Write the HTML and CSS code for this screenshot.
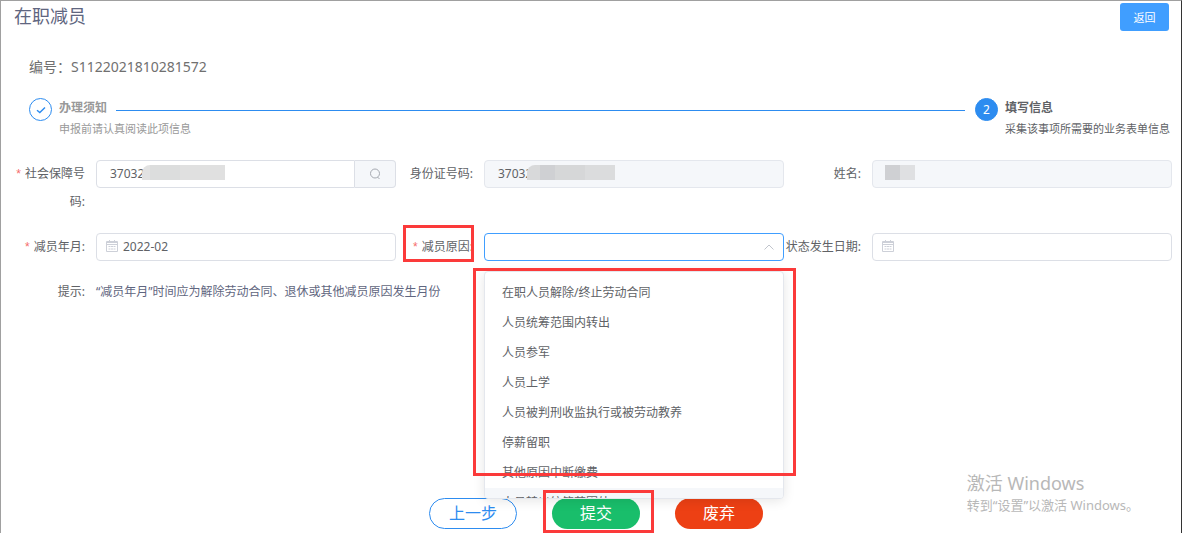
FILE: index.html
```
<!DOCTYPE html>
<html lang="zh-CN">

<head>
    <meta charset="UTF-8">
    <meta name="viewport" content="width=device-width, initial-scale=1.0">
    <title>在职减员</title>
    <link rel="stylesheet" href="styles.css">
</head>

<body>
    <div class="page">
        <header class="header">
            <h1 class="title">在职减员</h1>
            <button type="button" class="back-btn">返回</button>
        </header>
        <p class="serial">编号：S1122021810281572</p>

        <div class="steps">
            <div class="step done">
                <span class="step-icon">
                    <svg width="12" height="12" viewBox="0 0 12 12" fill="none" stroke="currentColor" stroke-width="1.4">
                        <path d="M2 6.2 4.8 8.6 10 3.4" />
                    </svg>
                </span>
                <div class="step-main">
                    <div class="step-title">办理须知</div>
                    <div class="step-desc">申报前请认真阅读此项信息</div>
                </div>
            </div>
            <div class="step now">
                <span class="step-icon">2</span>
                <div class="step-main">
                    <div class="step-title">填写信息</div>
                    <div class="step-desc">采集该事项所需要的业务表单信息</div>
                </div>
            </div>
        </div>

        <form class="form">
            <div class="item">
                <label class="label required" for="ssn">社会保障号码:</label>
                <div class="field group">
                    <input class="input" id="ssn" type="text" value="37032">
                    <span class="mask mask-ssn"></span>
                    <button type="button" class="search-btn" aria-label="查询">
                        <svg width="12" height="12" viewBox="0 0 12 12" fill="none" stroke="currentColor">
                            <circle cx="6" cy="5.5" r="4.5" />
                            <path d="M8.5 9 10.5 11" />
                        </svg>
                    </button>
                </div>
            </div>
            <div class="item">
                <label class="label" for="idcard">身份证号码:</label>
                <div class="field">
                    <input class="input" id="idcard" type="text" value="37032" disabled>
                    <span class="mask mask-id"></span>
                </div>
            </div>
            <div class="item">
                <label class="label" for="name">姓名:</label>
                <div class="field">
                    <input class="input" id="name" type="text" disabled>
                    <span class="mask mask-name"></span>
                </div>
            </div>

            <div class="item">
                <label class="label required" for="month">减员年月:</label>
                <div class="field">
                    <input class="input has-icon" id="month" type="text" value="2022-02">
                    <svg class="calendar" width="12" height="12" viewBox="0 0 12 12" fill="none" stroke="currentColor">
                        <path d="M.5 1.500h11v10H.5zM.5 2.500h11M.5 4.500h11M3.500 0v3M8.500 0v3" />
                        <path d="M2.500 6.500h7M2.500 9h7" stroke-dasharray="2 .5" />
                    </svg>
                </div>
            </div>
            <div class="item">
                <label class="label required" for="reason">减员原因:<span class="mark mark-label"></span></label>
                <div class="field">
                    <select class="input select" id="reason">
                        <option value=""></option>
                    </select>
                    <svg class="arrow" width="10" height="6" viewBox="0 0 10 6" fill="none" stroke="currentColor">
                        <path d="M.5 5.500 5 1l4.500 4.500" />
                    </svg>
                    <div class="dropdown">
                        <ul class="options">
                            <li>在职人员解除/终止劳动合同</li>
                            <li>人员统筹范围内转出</li>
                            <li>人员参军</li>
                            <li>人员上学</li>
                            <li>人员被判刑收监执行或被劳动教养</li>
                            <li>停薪留职</li>
                            <li>其他原因中断缴费</li>
                            <li class="hover">人员转出统筹范围外</li>
                        </ul>
                    </div>
                    <span class="mark mark-options"></span>
                </div>
            </div>
            <div class="item">
                <label class="label" for="date">状态发生日期:</label>
                <div class="field">
                    <input class="input has-icon" id="date" type="text">
                    <svg class="calendar" width="12" height="12" viewBox="0 0 12 12" fill="none" stroke="currentColor">
                        <path d="M.5 1.500h11v10H.5zM.5 2.500h11M.5 4.500h11M3.500 0v3M8.500 0v3" />
                        <path d="M2.500 6.500h7M2.500 9h7" stroke-dasharray="2 .5" />
                    </svg>
                </div>
            </div>

            <div class="item tip">
                <span class="label">提示:</span>
                <p class="tip-text">“减员年月”时间应为解除劳动合同、退休或其他减员原因发生月份</p>
            </div>
        </form>

        <div class="footer">
            <button type="button" class="btn prev">上一步</button>
            <button type="button" class="btn submit">提交<span class="mark mark-submit"></span></button>
            <button type="button" class="btn discard">废弃</button>
        </div>

        <div class="watermark">
            <div class="watermark-title">激活 Windows</div>
            <div>转到“设置”以激活 Windows。</div>
        </div>
    </div>
</body>

</html>
```

FILE: styles.css
```
* {
    box-sizing: border-box;
}

body {
    margin: 0;
    font-family: "Noto Sans", "Noto Sans CJK SC", sans-serif;
    font-size: 12px;
    color: #606266;
    background-color: #fff;
}

h1,
p,
ul {
    margin: 0;
    padding: 0;
}

input,
select,
button {
    font-family: inherit;
}

.page {
    position: relative;
    display: flex;
    flex-direction: column;
    min-height: 100vh;
    padding: 2px 9px 4px 7px;
    border: 1px solid #a0a0a0;
    border-right: 1px solid #333;
    border-bottom: 0;
}

/* header */
.header {
    display: flex;
    justify-content: space-between;
    padding: 0 3px 0 6px;
}

.title {
    font-size: 18px;
    font-weight: 400;
    line-height: 26px;
    color: #5f6680;
}

.back-btn {
    width: 49px;
    height: 28px;
    padding: 0;
    border: 0;
    border-radius: 3px;
    font-size: 11px;
    color: #fff;
    background-color: #409eff;
}

.serial {
    margin: 26px 0 20px 21px;
    font-size: 14px;
    line-height: 20px;
    color: #707070;
}

/* steps */
.steps {
    display: flex;
    padding-left: 21px;
}

.step {
    display: flex;
    gap: 7px;
}

.step.done {
    flex: 1;
    color: #999;
}

.step.now {
    width: 197px;
    color: #606266;
}

.step-icon {
    display: flex;
    flex: none;
    align-items: center;
    justify-content: center;
    width: 23px;
    height: 23px;
    margin-top: 1px;
    border: 1px solid #2d8cf0;
    border-radius: 50%;
    color: #2d8cf0;
}

.step.now .step-icon {
    color: #fff;
    background-color: #2d8cf0;
}

.step-main {
    flex: 1;
    white-space: nowrap;
}

.step-title {
    display: flex;
    align-items: center;
    gap: 9px;
    height: 20px;
    font-weight: 700;
}

.done .step-title::after {
    content: "";
    flex: 1;
    height: 1px;
    margin: 6px 10px 0 0;
    background-color: #2d8cf0;
}

.step-desc {
    font-size: 11px;
    line-height: 24px;
}

/* form */
.form {
    display: grid;
    grid-template-columns: repeat(3, 1fr);
    row-gap: 17px;
    margin-top: 19px;
}

.item {
    display: flex;
    align-items: flex-start;
}

.label {
    position: relative;
    flex: none;
    width: 88px;
    padding-right: 11px;
    line-height: 28px;
    text-align: right;
}

.required::before {
    content: "*";
    margin-right: 4px;
    font-family: "Liberation Sans", sans-serif;
    color: #f56c6c;
}

.field {
    position: relative;
    flex: 1;
}

.input {
    display: block;
    width: 100%;
    height: 28px;
    padding: 0 13px 2px;
    border: 1px solid #dcdfe6;
    border-radius: 4px;
    font-size: 12px;
    color: #606266;
    background-color: #fff;
}

.input:disabled {
    border-color: #e4e7ed;
    background-color: #f5f7fa;
}

.has-icon {
    padding-left: 26px;
}

.group {
    display: flex;
}

.group .input {
    flex: 1;
    border-radius: 4px 0 0 4px;
}

.search-btn {
    display: flex;
    align-items: center;
    justify-content: center;
    width: 41px;
    height: 28px;
    padding: 0;
    border: 1px solid #dcdfe6;
    border-left: 0;
    border-radius: 0 4px 4px 0;
    color: #a5a9b1;
    background-color: #f5f7fa;
}

.calendar {
    position: absolute;
    top: 7px;
    left: 10px;
    color: #cdd0d8;
}

.mask {
    position: absolute;
    top: 5px;
    height: 15px;
    border-radius: 8px 0 0 0;
}

.mask-ssn {
    left: 46px;
    width: 83px;
    background: linear-gradient(90deg, #e2e2e2 8px, #dcdddd 8px 38px, #e0e0e0 38px);
}

.mask-id {
    left: 43px;
    width: 88px;
    background: linear-gradient(90deg, #d8d9da 13px, #cfd0d3 13px 28px, #d6d7d8 28px 58px, #dbdcdd 58px);
}

.mask-name {
    left: 13px;
    width: 30px;
    border-radius: 0;
    background: linear-gradient(90deg, #cfd0d3 15px, #dfe0e2 15px);
}

.select {
    appearance: none;
    border-color: #409eff;
}

.arrow {
    position: absolute;
    top: 11px;
    right: 10px;
    color: #c0c4cc;
}

.dropdown {
    position: absolute;
    z-index: 1;
    top: 38px;
    left: 0;
    width: 100%;
    height: 228px;
    padding-top: 6px;
    border: 1px solid #e4e7ed;
    border-radius: 4px;
    overflow: hidden;
    background-color: #fff;
    box-shadow: 0 2px 12px rgba(0, 0, 0, 0.1);
}

.options {
    list-style: none;
}

.options li {
    height: 30px;
    padding: 0 17px;
    line-height: 30px;
    white-space: nowrap;
}

.options .hover {
    background-color: #f5f7fa;
}

.tip {
    grid-column: 1 / -1;
}

.tip-text {
    line-height: 28px;
    color: #5f6680;
}

/* footer */
.footer {
    display: flex;
    justify-content: center;
    gap: 35px;
    margin-top: auto;
    padding-left: 12px;
}

.btn {
    position: relative;
    width: 88px;
    height: 31px;
    padding: 0 0 3px;
    border: 0;
    border-radius: 16px;
    font-size: 16px;
    color: #fff;
}

.prev {
    border: 1px solid #2d8cf0;
    color: #2d8cf0;
    background-color: #fff;
}

.submit {
    background-color: #19be6b;
}

.discard {
    background-color: #ed4014;
}

/* red frames */
.mark {
    position: absolute;
    z-index: 2;
    border: 3px solid #fb3a3a;
    pointer-events: none;
}

.mark-label {
    top: -8px;
    right: 10px;
    width: 71px;
    height: 37px;
}

.mark-options {
    top: 35px;
    left: -11px;
    right: -12px;
    height: 208px;
}

.mark-submit {
    top: -8px;
    left: -9px;
    right: -14px;
    height: 43px;
}

.watermark {
    position: absolute;
    right: 42px;
    bottom: 18px;
    font-size: 13px;
    line-height: 20px;
    color: #b8b8b8;
}

.watermark-title {
    font-size: 18px;
    line-height: 24px;
}
```
